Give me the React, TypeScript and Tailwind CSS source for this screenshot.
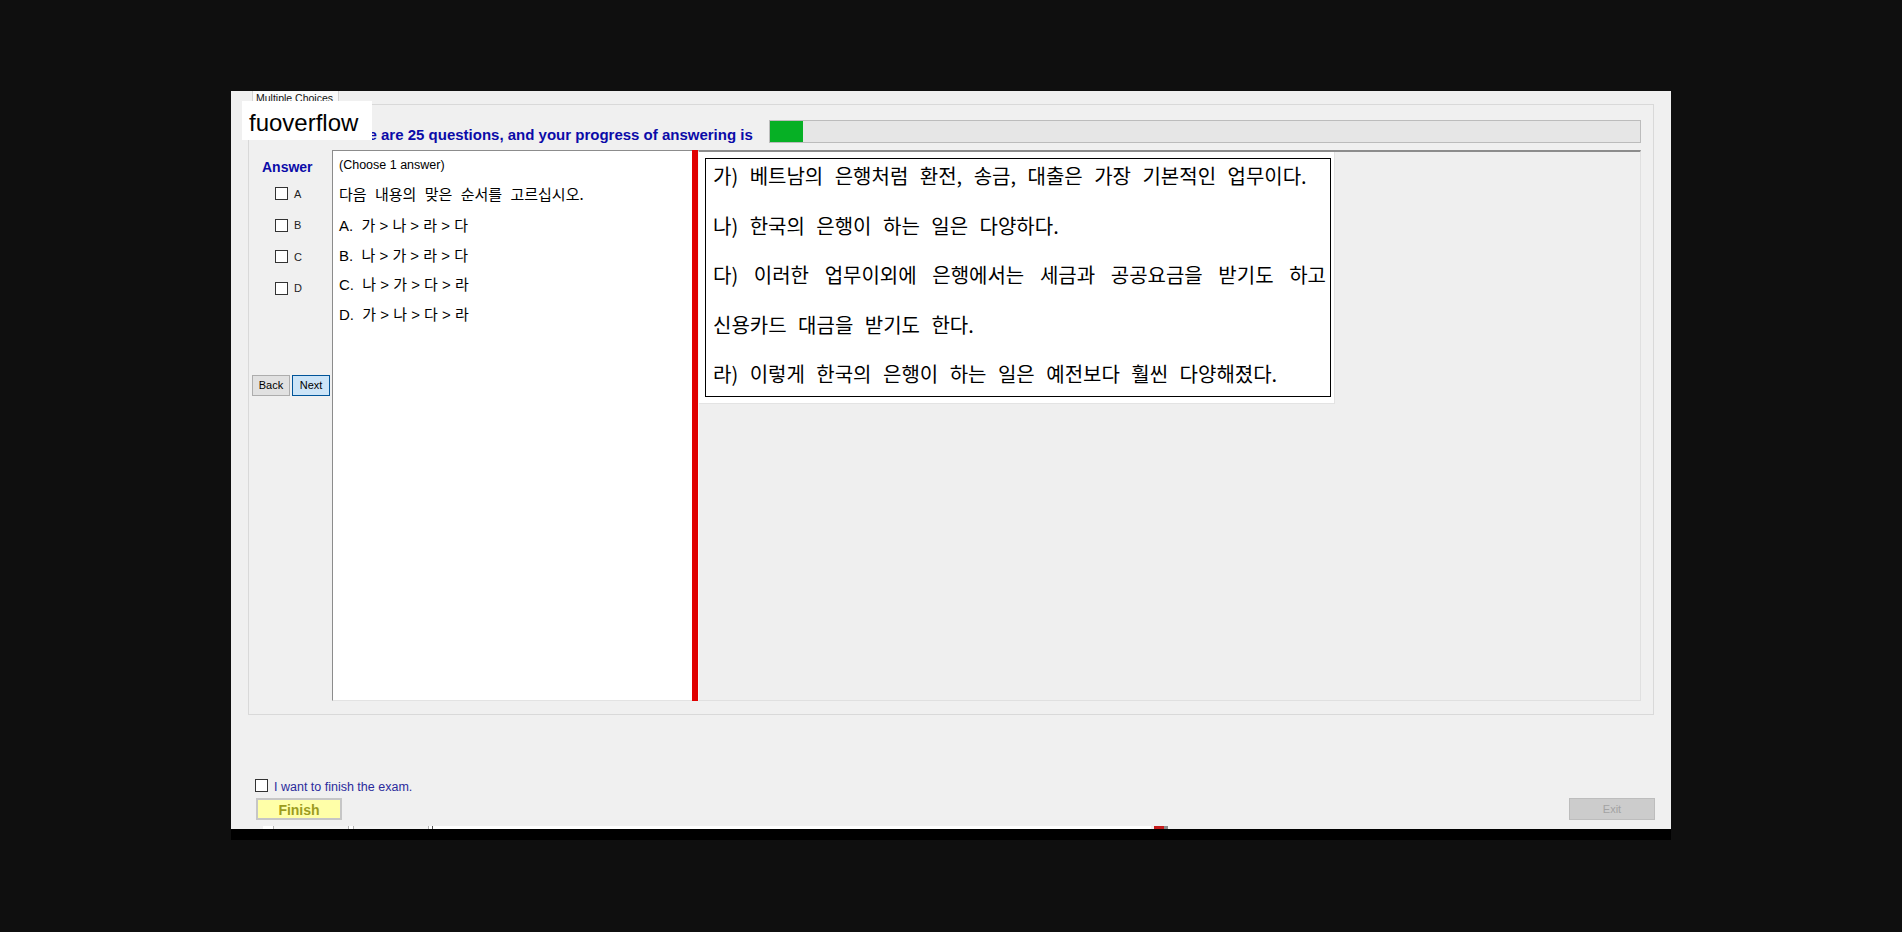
import React from 'react';

const passage = [
  { text: '가) 베트남의 은행처럼 환전, 송금, 대출은 가장 기본적인 업무이다.', justify: false },
  { text: '나) 한국의 은행이 하는 일은 다양하다.', justify: false },
  { text: '다) 이러한 업무이외에 은행에서는 세금과 공공요금을 받기도 하고', justify: true },
  { text: '신용카드 대금을 받기도 한다.', justify: false },
  { text: '라) 이렇게 한국의 은행이 하는 일은 예전보다 훨씬 다양해졌다.', justify: false },
];

const options = ['A.  가 > 나 > 라 > 다', 'B.  나 > 가 > 라 > 다', 'C.  나 > 가 > 다 > 라', 'D.  가 > 나 > 다 > 라'];

const Box = () => <span className='block w-[13px] h-[13px] border border-[#333333] bg-white shrink-0' />;

const App = (): JSX.Element => {
  return (
    <div className="w-full h-[932px] bg-[#0f0f0f] pt-[91px] pl-[231px] font-['Liberation_Sans','Noto_Sans_CJK_KR',sans-serif]">
      <div className='relative w-[1440px] h-[738px] bg-[#f0f0f0] flex flex-col'>
        {/* tab header */}
        <div className='h-[13px] pl-[21px] flex'>
          <div className='w-[87px] h-[13px] bg-[#fafafa] border-l border-r border-[#d4d4d4] overflow-hidden text-[10.5px] leading-[12px] pt-[1px] text-[#111] pl-[3px]'>
            Multiple Choices
          </div>
        </div>

        {/* tab page */}
        <div className='ml-[17px] w-[1406px] h-[611px] border border-[#d9d9d9] flex flex-col'>
          <div className='h-[45px] pt-[15px] pb-[7px] flex items-end pl-[87px]'>
            <span className='text-[15px] leading-[17px] font-bold text-[#0b0ba8] whitespace-nowrap'>
              There are 25 questions, and your progress of answering is
            </span>
            <div className='ml-[16px] w-[872px] h-[23px] bg-[#e6e6e6] border border-[#bcbcbc] flex'>
              <div className='w-[33px] h-full bg-[#06b025]' />
            </div>
          </div>

          <div className='h-[551px] flex'>
            {/* answer column */}
            <div className='w-[83px] flex flex-col'>
              <div className='pt-[9px] pl-[13px] text-[14px] leading-[16px] font-bold text-[#0b0ba8]'>Answer</div>
              <div className='mt-[3px] flex flex-col'>
                {['A', 'B', 'C', 'D'].map((l) => (
                  <div key={l} className='h-[31.5px] flex items-center pl-[26px] gap-[6px]'>
                    <Box />
                    <span className='text-[11px] text-[#222]'>{l}</span>
                  </div>
                ))}
              </div>
              <div className='mt-[71px] pl-[3px] flex gap-[2px]'>
                <button className='w-[38px] h-[21px] bg-[#e1e1e1] border border-[#adadad] text-[11px] text-black'>Back</button>
                <button className='w-[38px] h-[21px] bg-[#cce4f7] border border-[#005499] text-[11px] text-black'>Next</button>
              </div>
            </div>

            {/* question */}
            <div className='w-[360px] h-full bg-white border-l border-t border-b border-l-[#8c8c8c] border-t-[#8c8c8c] border-b-[#e3e3e3] pl-[6px] text-black'>
              <div className='mt-[6px] text-[12.5px] leading-[16px]'>(Choose 1 answer)</div>
              <div className="mt-[6px] text-[15px] leading-[30px] [word-spacing:5px] font-['Noto_Sans_CJK_KR',sans-serif]">다음 내용의 맞은 순서를 고르십시오.</div>
              <div className='mt-[2px] flex flex-col'>
                {options.map((o) => (
                  <div key={o} className='text-[15px] leading-[29.7px] whitespace-pre'>{o}</div>
                ))}
              </div>
            </div>

            {/* splitter */}
            <div className='w-[6px] h-full bg-[#e00000]' />

            {/* passage area */}
            <div className='w-[943px] h-full border-l border-t-2 border-b border-r border-l-[#f7f7f7] border-t-[#8c8c8c] border-b-[#e0e0e0] border-r-[#e0e0e0] bg-[#efefef]'>
              <div className='w-[636px] bg-white border-r border-b border-[#e3e3e3] pt-[6px] pl-[6px] pr-[3px] pb-[6px]'>
                <div className="border border-black pl-[7px] pr-[4px] pb-[6px] flex flex-col gap-[16.5px] font-['Noto_Sans_CJK_KR',sans-serif] text-[20px] text-black">
                  {passage.map((p) => (
                    <div
                      key={p.text}
                      className={
                        p.justify
                          ? 'leading-[33px] [word-spacing:7px] text-justify [text-align-last:justify] whitespace-nowrap'
                          : 'leading-[33px] [word-spacing:7px] whitespace-nowrap'
                      }
                    >
                      {p.text}
                    </div>
                  ))}
                </div>
              </div>
            </div>
          </div>
        </div>

        {/* bottom controls */}
        <div className='mt-[64px] pl-[24px] h-[13px] flex items-center gap-[6px]'>
          <Box />
          <span className='mt-[3px] text-[12.5px] leading-[13px] text-[#2b2b9c]'>I want to finish the exam.</span>
        </div>
        <div className='mt-[6px] h-[22px] flex justify-between pl-[25px] pr-[16px]'>
          <button className='w-[86px] h-[22px] bg-[#ffffa8] border-2 border-[#c6c6c6] text-[14px] font-bold text-[#9c9c1e]'>Finish</button>
          <button className='w-[86px] h-[22px] bg-[#cccccc] border border-[#bdbdbd] text-[11px] text-[#a3a3a3]'>Exit</button>
        </div>
        <div className='mt-[6px] h-[3px] flex pl-[32px]'>
          <div className='w-[10px] bg-white' />
          <div className='w-[1px] bg-[#b4b4b4]' />
          <div className='w-[74px] bg-[#f4f4f4]' />
          <div className='w-[1px] bg-[#b4b4b4]' />
          <div className='w-[4px] bg-white' />
          <div className='w-[1px] bg-[#b4b4b4]' />
          <div className='w-[74px] bg-[#f4f4f4]' />
          <div className='w-[1px] bg-[#b4b4b4]' />
          <div className='w-[3px] bg-white' />
          <div className='w-[1px] bg-[#555]' />
          <div className='w-[718px] bg-white' />
          <div className='w-[3px]' />
          <div className='w-[10px] bg-[#c41a1a]' />
          <div className='w-[4px] bg-[#8a8a8a]' />
        </div>

        {/* watermark */}
        <div className='absolute left-[11px] top-[10px] w-[130px] h-[39px] bg-white pl-[7px] pt-[4px] text-[24px] leading-[36px] text-black'>
          fuoverflow
        </div>
      </div>
      <div className='w-[1440px] h-[11px] bg-black' />
    </div>
  );
};

export default App;
